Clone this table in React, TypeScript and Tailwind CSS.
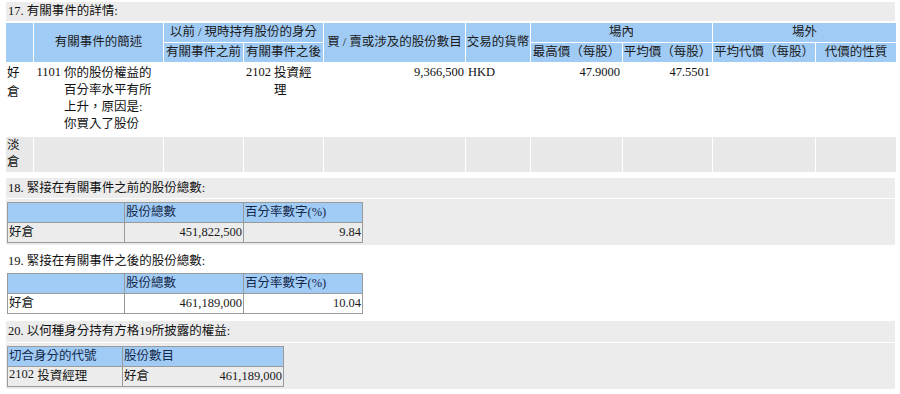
const font = { fontFamily: '"Liberation Serif", "Noto Sans CJK TC", serif' };

const head = 'bg-[#a0cbf5] text-[#1a1a1a] flex items-center justify-center';
const grayCell = 'bg-[#e8e8e8]';

function Section17() {
  return (
    <div>
      <div className="h-[19px] bg-[#ececec] pl-[2px] leading-[19px]">17. 有關事件的詳情:</div>
      <div className="mt-[2px] grid grid-cols-[27px_28px_100px_79px_28px_50px_141px_64px_91px_89px_102px_80px] grid-rows-[19px_19px_73px_35px] gap-px">
        {/* header row 1 */}
        <div className={`${head} row-span-2`} />
        <div className={`${head} col-span-2 row-span-2`}>有關事件的簡述</div>
        <div className={`${head} col-span-3`}>以前 / 現時持有股份的身分</div>
        <div className={`${head} row-span-2`}>買 / 賣或涉及的股份數目</div>
        <div className={`${head} row-span-2`}>交易的貨幣</div>
        <div className={`${head} col-span-2`}>場內</div>
        <div className={`${head} col-span-2`}>場外</div>
        {/* header row 2 */}
        <div className={head}>有關事件之前</div>
        <div className={`${head} col-span-2`}>有關事件之後</div>
        <div className={head}>最高價（每股）</div>
        <div className={head}>平均價（每股）</div>
        <div className={head}>平均代價（每股）</div>
        <div className={head}>代價的性質</div>

        {/* 好倉 */}
        <div className="pl-[1px] pt-[1px] leading-[19px]">
          好<br />倉
        </div>
        <div className="pr-[1px] pt-[1px] text-right leading-[17px]">1101</div>
        <div className="pl-[1px] pt-[2px] leading-[17px]">
          <div>你的股份權益的</div>
          <div>百分率水平有所</div>
          <div>上升，原因是:</div>
          <div>你買入了股份</div>
        </div>
        <div />
        <div className="pr-[1px] pt-[1px] text-right leading-[17px]">2102</div>
        <div className="pl-[1px] pt-[2px] leading-[17px]">
          投資經
          <br />
          理
        </div>
        <div className="pr-[1px] pt-[1px] text-right leading-[17px]">9,366,500</div>
        <div className="pl-[2px] pt-[1px] leading-[17px]">HKD</div>
        <div className="pr-[2px] pt-[1px] text-right leading-[17px]">47.9000</div>
        <div className="pr-[2px] pt-[1px] text-right leading-[17px]">47.5501</div>
        <div />
        <div />

        {/* 淡倉 */}
        <div className={`${grayCell} pl-[1px] leading-[17px]`}>
          淡<br />倉
        </div>
        <div className={`${grayCell} col-span-2`} />
        <div className={grayCell} />
        <div className={`${grayCell} col-span-2`} />
        <div className={grayCell} />
        <div className={grayCell} />
        <div className={grayCell} />
        <div className={grayCell} />
        <div className={grayCell} />
        <div className={grayCell} />
      </div>
    </div>
  );
}

function TotalTable({ total, pct, shaded }: { total: string; pct: string; shaded: boolean }) {
  const cell = shaded ? 'bg-[#ececec]' : 'bg-white';
  return (
    <table className="border-collapse border border-[#9a9a9a] text-[#1a1a1a]">
      <tbody>
        <tr className="h-[20px] bg-[#a0cbf5] text-[#14284a]">
          <td className="w-[117px] border border-[#9a9a9a] p-0" />
          <td className="w-[119px] border border-[#9a9a9a] px-[1px] py-0">股份總數</td>
          <td className="w-[119px] border border-[#9a9a9a] px-[1px] py-0">百分率數字(%)</td>
        </tr>
        <tr className={`h-[20px] ${cell}`}>
          <td className="border border-[#9a9a9a] px-[1px] py-0">好倉</td>
          <td className="border border-[#9a9a9a] px-[1px] py-0 text-right">{total}</td>
          <td className="border border-[#9a9a9a] px-[1px] py-0 text-right">{pct}</td>
        </tr>
      </tbody>
    </table>
  );
}

export default function App() {
  return (
    <div className="w-[900px] bg-white pl-[6px] pr-[5px] pt-[2px] text-[12.5px] text-[#111]" style={font}>
      <Section17 />

      <div className="mt-[6px] h-[20px] bg-[#ececec] pl-[2px] leading-[20px]">18. 緊接在有關事件之前的股份總數:</div>
      <div className="mt-px flex h-[46px] items-start bg-[#ececec] pl-px pt-[3px]">
        <TotalTable total="451,822,500" pct="9.84" shaded />
      </div>

      <div className="flex h-[76px] flex-col bg-white">
        <div className="mt-[6px] h-[20px] pl-[2px] leading-[20px]">19. 緊接在有關事件之後的股份總數:</div>
        <div className="mt-[2px] pl-px">
          <TotalTable total="461,189,000" pct="10.04" shaded={false} />
        </div>
      </div>

      <div className="h-[21px] bg-[#ececec] pl-[2px] leading-[21px]">20. 以何種身分持有方格19所披露的權益:</div>
      <div className="mt-px flex h-[46px] items-start bg-[#ececec] pl-px pt-[3px]">
        <table className="border-collapse border border-[#9a9a9a] text-[#1a1a1a]">
          <tbody>
            <tr className="h-[20px] bg-[#a0cbf5] text-[#14284a]">
              <td className="w-[115px] border border-[#9a9a9a] px-[1px] py-0">切合身分的代號</td>
              <td className="w-[161px] border border-[#9a9a9a] px-[1px] py-0">股份數目</td>
            </tr>
            <tr className="h-[20px] bg-[#ececec]">
              <td className="border border-[#9a9a9a] px-[1px] py-0">
                <span className="relative -top-[2px]">2102</span> 投資經理
              </td>
              <td className="border border-[#9a9a9a] px-[1px] py-0">
                <div className="flex justify-between">
                  <span>好倉</span>
                  <span>461,189,000</span>
                </div>
              </td>
            </tr>
          </tbody>
        </table>
      </div>
      <div className="h-[4px]" />
    </div>
  );
}
